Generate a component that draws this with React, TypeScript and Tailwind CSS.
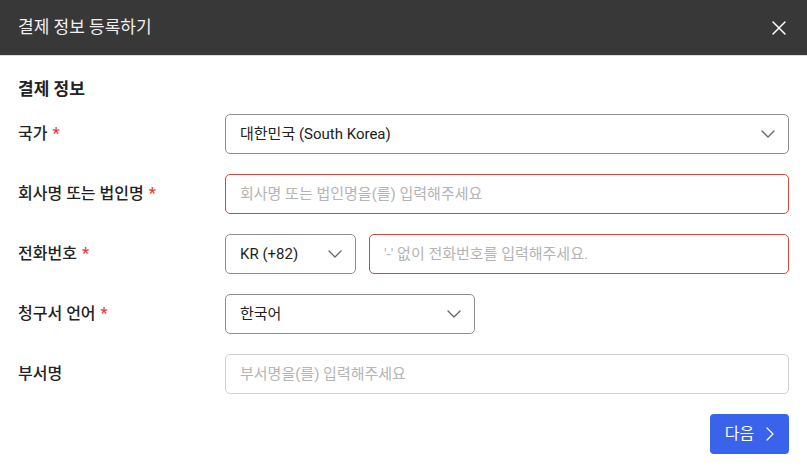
import React from "react";

const font = { fontFamily: '"Roboto", "Noto Sans CJK KR", sans-serif' };

function Chevron({ className = "" }: { className?: string }) {
  return (
    <svg width="14" height="8" viewBox="0 0 14 8" className={className} fill="none">
      <path d="M1 1l6 6 6-6" stroke="#666" strokeWidth="1.3" strokeLinecap="round" strokeLinejoin="round" />
    </svg>
  );
}

function Label({ text, required }: { text: string; required?: boolean }) {
  return (
    <div className="w-[207px] shrink-0 text-[16px] font-medium text-[#222]">
      {text}
      {required && <span className="ml-[5px] text-[#e2403a]">*</span>}
    </div>
  );
}

function Select({ value, className = "" }: { value: string; className?: string }) {
  return (
    <div
      className={`h-10 flex items-center justify-between pl-[14px] pr-[13px] border border-[#8f8f8f] rounded-[5px] bg-white text-[15px] text-[#222] ${className}`}
    >
      <span>{value}</span>
      <Chevron />
    </div>
  );
}

function Input({ placeholder, error, className = "" }: { placeholder: string; error?: boolean; className?: string }) {
  return (
    <div
      className={`h-10 flex items-center pl-[14px] border rounded-[5px] bg-white text-[15px] text-[#b4b4b4] ${
        error ? "border-[#d4463e]" : "border-[#d0d0d0]"
      } ${className}`}
    >
      {placeholder}
    </div>
  );
}

export default function App() {
  return (
    <div className="w-[807px] h-[471px] bg-white overflow-hidden" style={font}>
      <div className="h-[56px] bg-[#383838] border-b border-[#dcdcdc] flex items-center justify-between pl-[18px] pr-[20px]">
        <div className="text-[17px] text-[#f0f0f0]">결제 정보 등록하기</div>
        <svg width="16" height="16" viewBox="0 0 16 16" fill="none">
          <path d="M2 2l12 12M14 2L2 14" stroke="#fff" strokeWidth="1.5" strokeLinecap="round" />
        </svg>
      </div>
      <div className="px-[18px] pt-[21px]">
        <div className="text-[17px] font-bold text-[#222] leading-6 mb-[13px]">결제 정보</div>
        <div className="flex flex-col gap-5">
          <div className="flex items-center">
            <Label text="국가" required />
            <Select value="대한민국 (South Korea)" className="flex-1" />
          </div>
          <div className="flex items-center">
            <Label text="회사명 또는 법인명" required />
            <Input placeholder="회사명 또는 법인명을(를) 입력해주세요" error className="flex-1" />
          </div>
          <div className="flex items-center">
            <Label text="전화번호" required />
            <div className="flex-1 flex gap-[13px]">
              <Select value="KR (+82)" className="w-[131px]" />
              <Input placeholder="'-' 없이 전화번호를 입력해주세요." error className="flex-1" />
            </div>
          </div>
          <div className="flex items-center">
            <Label text="청구서 언어" required />
            <Select value="한국어" className="w-[250px]" />
          </div>
          <div className="flex items-center">
            <Label text="부서명" />
            <Input placeholder="부서명을(를) 입력해주세요" className="flex-1" />
          </div>
        </div>
        <div className="flex justify-end mt-5">
          <button className="h-10 w-[79px] rounded-[4px] bg-[#3863ea] text-white text-[16px] flex items-center justify-center gap-[12px]">
            <span>다음</span>
            <svg width="8" height="14" viewBox="0 0 8 14" fill="none">
              <path d="M1 1l6 6-6 6" stroke="#fff" strokeWidth="1.3" strokeLinecap="round" strokeLinejoin="round" />
            </svg>
          </button>
        </div>
      </div>
    </div>
  );
}
